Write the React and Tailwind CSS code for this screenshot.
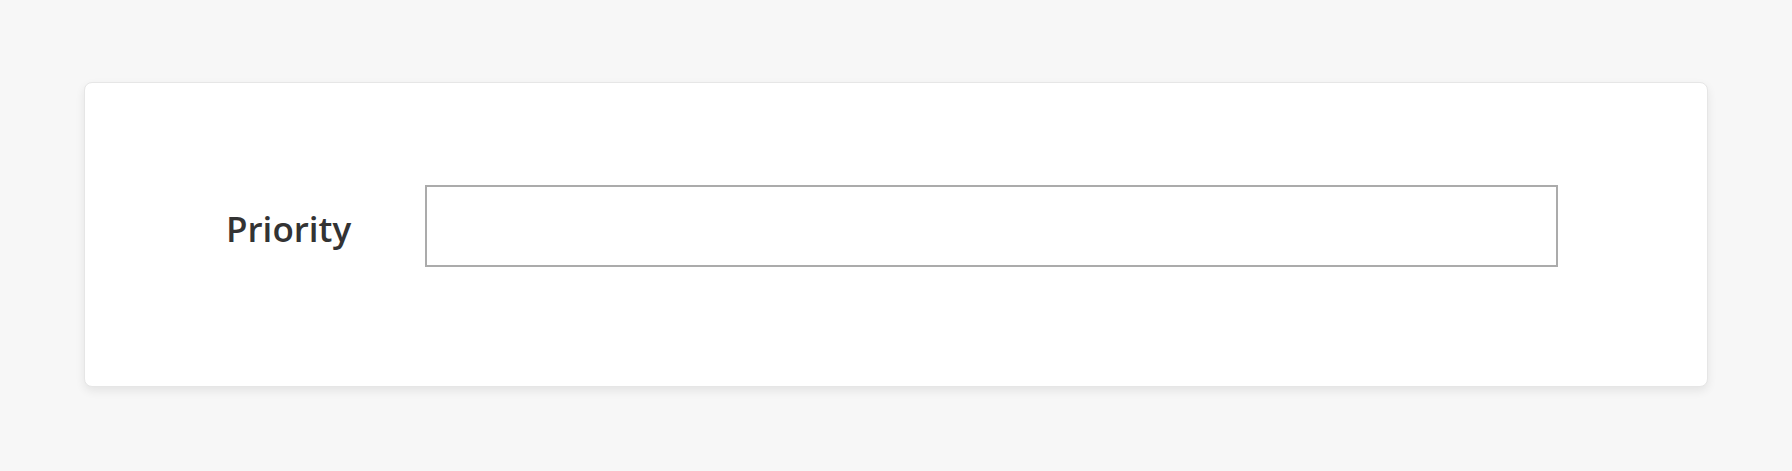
export default function App() {
  return (
    <div
      className="min-h-screen w-full bg-[#f7f7f7] px-[84px] pt-[82px] pb-[84px]"
      style={{ fontFamily: "'Open Sans', 'Noto Sans', sans-serif" }}
    >
      {/* ── Form card ───────────────────────────────────── */}
      <div className="flex items-center rounded-lg border border-[#e6e6e6] bg-white pl-[141px] pr-[149px] pt-[102px] pb-[119px] shadow-[0_4px_10px_rgba(0,0,0,0.08)]">
        <label
          htmlFor="priority"
          className="w-[199px] shrink-0 pt-[4px] text-[35px] font-semibold leading-none text-[#333333]"
        >
          Priority
        </label>
        <input
          id="priority"
          type="text"
          className="h-[82px] flex-1 border-2 border-[#ababab] bg-white px-3 text-[20px] outline-none"
        />
      </div>
    </div>
  );
}
